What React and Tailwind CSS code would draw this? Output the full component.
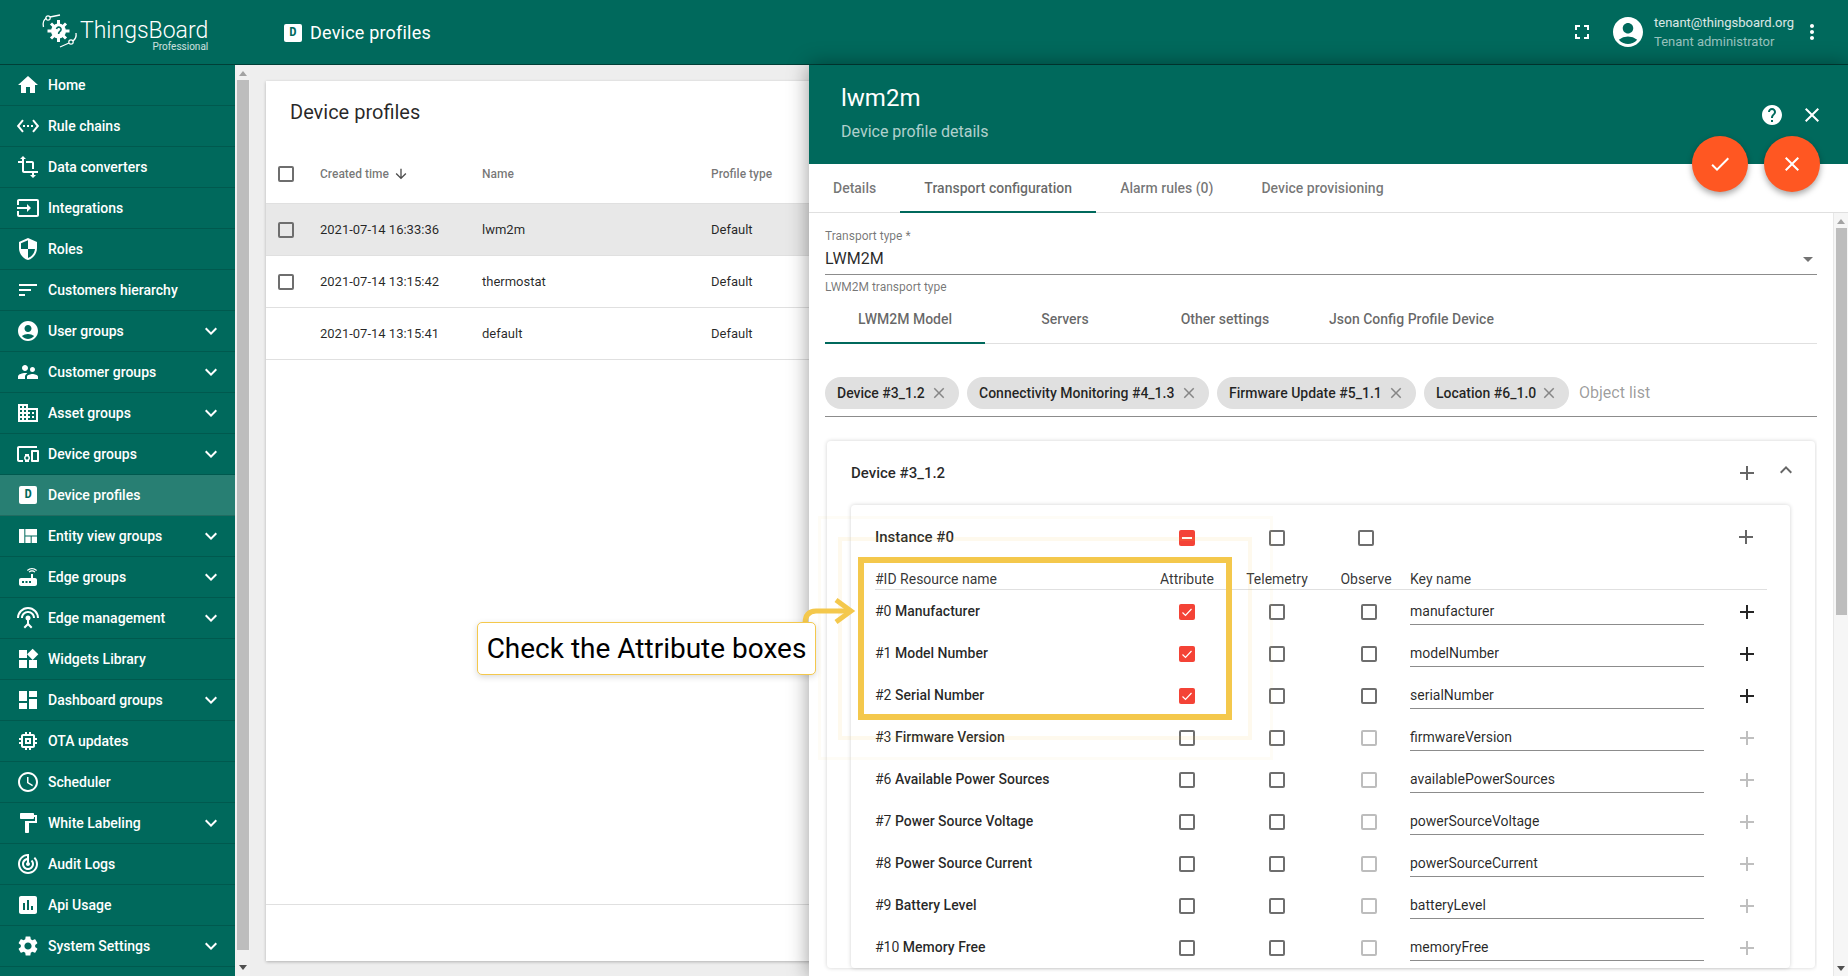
import React from 'react';
import {
  MdHome, MdSettingsEthernet, MdTransform, MdInput, MdSecurity, MdSort, MdAccountCircle,
  MdSupervisorAccount, MdDomain, MdDevicesOther, MdViewQuilt, MdRouter, MdSettingsInputAntenna,
  MdWidgets, MdDashboard, MdMemory, MdSchedule, MdFormatPaint, MdTrackChanges, MdInsertChart,
  MdSettings, MdExpandMore, MdExpandLess, MdFullscreen, MdMoreVert, MdHelp, MdClose, MdCheck,
  MdArrowDownward, MdAdd, MdArrowDropDown,
} from 'react-icons/md';

const DIcon = () => (
  <div className="flex h-[18px] w-[18px] items-center justify-center rounded-[2px] bg-white font-['Liberation_Mono',monospace] text-[12px] font-bold text-[#00695c]">D</div>
);

const menu = [
  { label: 'Home', icon: MdHome },
  { label: 'Rule chains', icon: MdSettingsEthernet },
  { label: 'Data converters', icon: MdTransform },
  { label: 'Integrations', icon: MdInput },
  { label: 'Roles', icon: MdSecurity },
  { label: 'Customers hierarchy', icon: MdSort },
  { label: 'User groups', icon: MdAccountCircle, more: true },
  { label: 'Customer groups', icon: MdSupervisorAccount, more: true },
  { label: 'Asset groups', icon: MdDomain, more: true },
  { label: 'Device groups', icon: MdDevicesOther, more: true },
  { label: 'Device profiles', icon: DIcon, active: true },
  { label: 'Entity view groups', icon: MdViewQuilt, more: true },
  { label: 'Edge groups', icon: MdRouter, more: true },
  { label: 'Edge management', icon: MdSettingsInputAntenna, more: true },
  { label: 'Widgets Library', icon: MdWidgets },
  { label: 'Dashboard groups', icon: MdDashboard, more: true },
  { label: 'OTA updates', icon: MdMemory },
  { label: 'Scheduler', icon: MdSchedule },
  { label: 'White Labeling', icon: MdFormatPaint, more: true },
  { label: 'Audit Logs', icon: MdTrackChanges },
  { label: 'Api Usage', icon: MdInsertChart },
  { label: 'System Settings', icon: MdSettings, more: true },
];

const profiles = [
  { time: '2021-07-14 16:33:36', name: 'lwm2m', selected: true, box: true },
  { time: '2021-07-14 13:15:42', name: 'thermostat', box: true },
  { time: '2021-07-14 13:15:41', name: 'default' },
];

const resources = [
  { id: '#0', name: 'Manufacturer', key: 'manufacturer', on: true },
  { id: '#1', name: 'Model Number', key: 'modelNumber', on: true },
  { id: '#2', name: 'Serial Number', key: 'serialNumber', on: true },
  { id: '#3', name: 'Firmware Version', key: 'firmwareVersion' },
  { id: '#6', name: 'Available Power Sources', key: 'availablePowerSources' },
  { id: '#7', name: 'Power Source Voltage', key: 'powerSourceVoltage' },
  { id: '#8', name: 'Power Source Current', key: 'powerSourceCurrent' },
  { id: '#9', name: 'Battery Level', key: 'batteryLevel' },
  { id: '#10', name: 'Memory Free', key: 'memoryFree' },
];

const chips = [
  { label: 'Device #3_1.2', w: 'w-[134px]' },
  { label: 'Connectivity Monitoring #4_1.3', w: 'w-[242px]' },
  { label: 'Firmware Update #5_1.1', w: 'w-[199px]' },
  { label: 'Location #6_1.0', w: 'w-[145px]' },
];

// 체크박스
function Box({ state, disabled }) {
  if (state === 'checked') {
    return (
      <div className="flex h-4 w-4 items-center justify-center rounded-[2px] bg-[#f44336]">
        <svg viewBox="0 0 16 16" className="h-4 w-4" fill="none" stroke="#fff" strokeWidth="1.2">
          <path d="M3.5 8.5 6.5 11.5 12.5 5" />
        </svg>
      </div>
    );
  }
  if (state === 'mixed') {
    return (
      <div className="flex h-4 w-4 items-center justify-center rounded-[2px] bg-[#f44336]">
        <div className="h-[2px] w-[10px] bg-white" />
      </div>
    );
  }
  return <div className={`h-4 w-4 rounded-[2px] border-2 ${disabled ? 'border-[#bdbdbd]' : 'border-[#6e6e6e]'}`} />;
}

function Logo() {
  return (
    <svg viewBox="0 0 40 40" className="h-[40px] w-[40px]" fill="none" stroke="#fff">
      <circle cx="18.5" cy="21" r="7.5" fill="#fff" stroke="none" />
      <g stroke="#fff" strokeWidth="3">
        <path d="M18.500 10v22M7.500 21h22M11 13.500l15 15M26 13.500l-15 15" />
      </g>
      <path d="M16.500 19a2.300 2.300 0 1 1 3.200 2.500l-1 1.500v1" stroke="#00695c" strokeWidth="1.6" />
      <path d="M3.500 17C2.500 13 4 9.500 6.500 8M10 7 20 5" strokeWidth="1.300" />
      <circle cx="8" cy="8" r="2.200" strokeWidth="1.200" />
      <path d="M36 23c.5 3-.5 6-3 8M29 33l-9 4" strokeWidth="1.300" />
      <circle cx="31" cy="32" r="2.200" strokeWidth="1.200" />
    </svg>
  );
}

function Sidebar() {
  return (
    <div className="flex w-[250px] shrink-0 bg-white">
      <div className="w-[235px] bg-[#00695c]">
        {menu.map((m) => (
          <div key={m.label} className={`flex h-[41px] items-center border-b border-black/15 text-[14px] font-medium text-white ${m.active ? 'bg-[#287f73]' : ''}`}>
            <div className="flex w-[48px] shrink-0 items-center justify-center pl-[8px]">
              <m.icon size={24} />
            </div>
            <span className="flex-1">{m.label}</span>
            {m.more && <MdExpandMore size={24} className="mr-[12px]" />}
          </div>
        ))}
      </div>
      <div className="flex w-[15px] flex-col items-center bg-[#f1f1f1]">
        <div className="mt-[6px] h-0 w-0 border-x-[4px] border-b-[5px] border-x-transparent border-b-[#a3a3a3]" />
        <div className="mt-[4px] h-[870px] w-[12px] bg-[#bdbdbd]" />
        <div className="mt-[15px] h-0 w-0 border-x-[4px] border-t-[5px] border-x-transparent border-t-[#505050]" />
      </div>
    </div>
  );
}

function ProfilesTable() {
  return (
    <div className="flex-1 bg-[#eeeeee] pl-[16px] pt-[16px]">
      <div className="flex h-[880px] w-[1000px] flex-col bg-white shadow-[0_1px_3px_rgba(0,0,0,0.25)]">
        <div className="h-[64px] pl-[24px] pt-[15px] text-[20px] leading-[32px] text-black/85">Device profiles</div>
        <div className="flex h-[59px] items-center border-b border-[#e0e0e0] text-[12px] font-medium text-black/55">
          <div className="w-[54px] pl-[12px]"><Box /></div>
          <div className="flex w-[162px] items-center gap-[4px]">Created time <MdArrowDownward size={16} className="text-black/70" /></div>
          <div className="w-[229px]">Name</div>
          <div>Profile type</div>
        </div>
        {profiles.map((p) => (
          <div key={p.name} className={`flex h-[52px] items-center border-b border-[#e0e0e0] text-[13px] text-black/85 ${p.selected ? 'bg-[#e8e8e8]' : ''}`}>
            <div className="w-[54px] pl-[12px]">{p.box && <Box />}</div>
            <div className="w-[162px]">{p.time}</div>
            <div className="w-[229px]">{p.name}</div>
            <div>Default</div>
          </div>
        ))}
        <div className="flex-1" />
        <div className="h-[57px] border-t border-[#e0e0e0]" />
      </div>
    </div>
  );
}

function ResourceRow({ r }) {
  return (
    <div className="flex h-[42px] items-center text-[14px] text-black/85">
      <div className="w-[288px]">{r.id} <span className="font-medium">{r.name}</span></div>
      <div className="flex w-[48px] justify-center pt-[2px]"><Box state={r.on ? 'checked' : undefined} /></div>
      <div className="flex w-[132px] justify-center pt-[2px]"><Box /></div>
      <div className="flex w-[52px] justify-center pt-[2px]"><Box disabled={!r.on} /></div>
      <div className="ml-[15px] h-[42px] w-[294px] pt-[11px]">
        <div className="h-[24px] border-b border-[#8c8c8c] leading-[20px]">{r.key}</div>
      </div>
      <MdAdd size={24} className={`ml-[31px] mt-[2px] ${r.on ? 'text-black/85' : 'text-black/25'}`} />
    </div>
  );
}

function DetailsPanel() {
  return (
    <div className="absolute bottom-0 left-[809px] right-0 top-[65px] flex flex-col bg-white shadow-[0_0_20px_rgba(0,0,0,0.4)]">
      <div className="relative h-[99px] shrink-0 bg-[#00695c] pl-[32px] text-white">
        <div className="pt-[15px] text-[24px] leading-[36px]">lwm2m</div>
        <div className="pt-[4px] text-[16px] leading-[24px] text-white/70">Device profile details</div>
        <MdHelp size={24} className="absolute left-[951px] top-[38px]" />
        <MdClose size={24} className="absolute left-[991px] top-[38px]" />
        <div className="absolute left-[883px] top-[71px] flex h-[56px] w-[56px] items-center justify-center rounded-full bg-[#ff5722] shadow-[0_3px_6px_rgba(0,0,0,0.35)]"><MdCheck size={24} /></div>
        <div className="absolute left-[955px] top-[71px] flex h-[56px] w-[56px] items-center justify-center rounded-full bg-[#ff5722] shadow-[0_3px_6px_rgba(0,0,0,0.35)]"><MdClose size={24} /></div>
      </div>
      <div className="flex h-[49px] shrink-0 border-b border-[#e0e0e0] text-[14px] font-medium text-black/55">
        <div className="flex items-center px-[24px]">Details</div>
        <div className="-mb-px flex w-[196px] items-center justify-center border-b-2 border-[#00695c] pt-[2px] text-black/60">Transport configuration</div>
        <div className="flex items-center px-[24px]">Alarm rules (0)</div>
        <div className="flex items-center px-[24px]">Device provisioning</div>
      </div>
      <div className="flex min-h-0 flex-1">
        <div className="w-[1008px] overflow-hidden pl-[16px] pt-[16px]">
          <div className="text-[12px] leading-[14px] text-black/55">Transport type *</div>
          <div className="mt-[6px] flex h-[26px] items-start justify-between border-b border-[#8c8c8c] text-[16px] leading-[20px] text-black/85">
            LWM2M
            <MdArrowDropDown size={24} className="-mr-[3px] -mt-[2px] text-black/55" />
          </div>
          <div className="mt-[5px] text-[12px] leading-[14px] text-black/55">LWM2M transport type</div>
          <div className="mt-[2px] flex h-[48px] border-b border-[#e0e0e0] text-[14px] font-medium text-black/60">
            <div className="-mb-px flex w-[160px] items-center justify-center border-b-2 border-[#00695c]">LWM2M Model</div>
            <div className="flex w-[160px] items-center justify-center">Servers</div>
            <div className="flex w-[160px] items-center justify-center">Other settings</div>
            <div className="flex items-center px-[24px]">Json Config Profile Device</div>
          </div>
          <div className="mt-[33px] flex h-[40px] items-start gap-[8px] border-b border-[#8c8c8c]">
            {chips.map((c) => (
              <div key={c.label} className={`flex h-[32px] items-center justify-between rounded-full bg-[#e0e0e0] pl-[12px] pr-[11px] text-[14px] font-medium text-black/85 ${c.w}`}>
                {c.label}
                <MdClose size={18} className="text-black/40" />
              </div>
            ))}
            <div className="ml-[2px] text-[16px] leading-[32px] text-black/40">Object list</div>
          </div>
          <div className="mx-[2px] mt-[24px] rounded-[4px] pl-[24px] pr-[25px] shadow-[0_0_4px_rgba(0,0,0,0.18)]">
            <div className="flex h-[64px] items-center text-[15px] font-medium text-black/85">
              <span className="flex-1">Device #3_1.2</span>
              <MdAdd size={24} className="-mr-[1px] text-black/60" />
              <MdExpandLess size={24} className="-mr-[8px] -mt-[7px] ml-[16px] text-black/60" />
            </div>
            <div className="rounded-[4px] pl-[24px] pr-[23px] shadow-[0_0_4px_rgba(0,0,0,0.18)]">
              <div className="flex h-[64px] items-center text-[15px] font-medium text-black/85">
                <div className="w-[288px]">Instance #0</div>
                <div className="flex w-[48px] justify-center pt-[2px]"><Box state="mixed" /></div>
                <div className="flex w-[132px] justify-center pt-[2px]"><Box /></div>
                <div className="flex w-[46px] justify-center pt-[2px]"><Box /></div>
                <div className="flex-1" />
                <MdAdd size={24} className="mr-[9px] text-black/60" />
              </div>
              <div className="flex h-[21px] items-center border-b border-[#e0e0e0] text-[14px] text-black/80">
                <div className="w-[288px]">#ID Resource name</div>
                <div className="flex w-[48px] justify-center whitespace-nowrap">Attribute</div>
                <div className="flex w-[132px] justify-center">Telemetry</div>
                <div className="flex w-[46px] justify-center">Observe</div>
                <div className="ml-[21px]">Key name</div>
              </div>
              {resources.map((r) => <ResourceRow key={r.key} r={r} />)}
            </div>
          </div>
        </div>
        <div className="ml-auto flex w-[15px] flex-col items-center border-l border-[#e8e8e8] bg-[#f6f6f6]">
          <div className="mt-[6px] h-0 w-0 border-x-[4px] border-b-[5px] border-x-transparent border-b-[#a3a3a3]" />
          <div className="mt-[4px] h-[387px] w-[11px] bg-[#bdbdbd]" />
          <div className="mb-[5px] mt-auto h-0 w-0 border-x-[4px] border-t-[5px] border-x-transparent border-t-[#505050]" />
        </div>
      </div>
    </div>
  );
}

// 강조 표시 (노란 박스, 화살표, 말풍선)
function Callout() {
  return (
    <>
      <div className="absolute left-[818px] top-[516px] h-[244px] w-[455px] border-[3px] border-[#f4c84c]/5" />
      <div className="absolute left-[838px] top-[537px] h-[203px] w-[414px] border-[4px] border-[#f4c84c]/10" />
      <div className="absolute left-[858px] top-[557px] h-[163px] w-[374px] border-[6px] border-[#f4c84c]" />
      <svg className="absolute left-[800px] top-[596px] h-[32px] w-[56px]" viewBox="0 0 56 32" fill="none" stroke="#f4c84c" strokeWidth="5">
        <path d="M5 28C5 19 9 15 16 15H50" />
        <path d="M36 4 51 15 36 26" />
      </svg>
      <div className="absolute left-[477px] top-[622px] flex h-[53px] w-[339px] items-center justify-center rounded-[5px] border border-[#f4c84c] bg-white text-[28px] text-black shadow-[0_2px_6px_rgba(0,0,0,0.15)]">
        Check the Attribute boxes
      </div>
    </>
  );
}

function App() {
  return (
    <div className="relative flex h-[976px] w-[1848px] flex-col overflow-hidden font-['Roboto',sans-serif]">
      <div className="flex h-[65px] shrink-0 border-b border-black/40 bg-[#00695c] text-white">
        <div className="flex w-[250px] shrink-0 items-start pl-[40px] pt-[10px]">
          <Logo />
          <div className="mt-[7px] flex flex-col items-end">
            <div className="text-[23px] font-light leading-[28px]">ThingsBoard</div>
            <div className="-mt-[4px] text-[10px] leading-[11px] text-white/80">Professional</div>
          </div>
        </div>
        <div className="flex flex-1 items-center pl-[34px] pt-[1px] text-[18px] tracking-[0.2px]">
          <DIcon />
          <span className="ml-[8px]">Device profiles</span>
        </div>
        <div className="flex items-center pr-[24px]">
          <MdFullscreen size={24} className="-mr-[1px]" />
          <MdAccountCircle size={36} className="ml-[17px]" />
          <div className="ml-[8px] w-[145px] text-[13px] leading-[19px]">
            <div className="-mt-[1px] text-white/85">tenant@thingsboard.org</div>
            <div className="text-white/60">Tenant administrator</div>
          </div>
          <MdMoreVert size={24} className="ml-[1px]" />
        </div>
      </div>
      <div className="flex min-h-0 flex-1">
        <Sidebar />
        <ProfilesTable />
      </div>
      <DetailsPanel />
      <Callout />
    </div>
  );
}

export default App;
